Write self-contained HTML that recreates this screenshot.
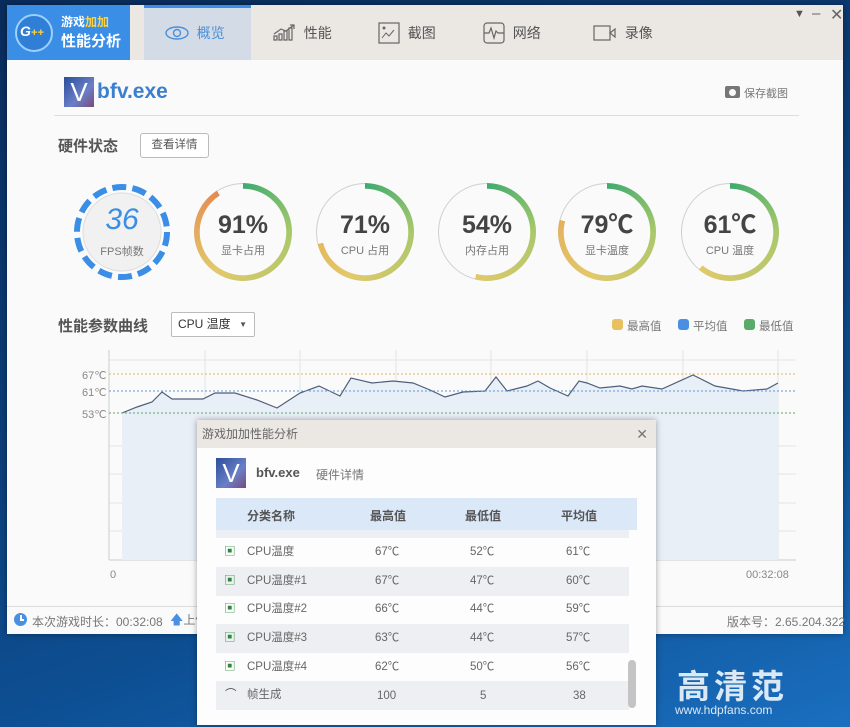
<!DOCTYPE html>
<html><head><meta charset="utf-8"><style>
*{margin:0;padding:0;box-sizing:border-box}
body{width:850px;height:727px;overflow:hidden;position:relative;font-family:"Liberation Sans","Noto Sans CJK SC",sans-serif;background:linear-gradient(160deg,#0a2c5c 0%,#0c3f7a 45%,#0d4f93 70%,#1a6fbf 100%)}
.abs{position:absolute;white-space:nowrap}
.win{left:7px;top:5px;width:836px;height:629px;background:#fafafa;box-shadow:0 0 6px rgba(0,0,0,.4)}
.tabbar{left:0;top:0;width:836px;height:55px;background:#ebe7e3}
.logo{left:0;top:0;width:123px;height:55px;background:#3a8ee6}
.tab{top:0;height:55px;font-size:14px;color:#555;display:flex;align-items:center}
.g{position:absolute;top:183px;width:98px;height:98px}
.track{position:absolute;left:0;top:0;width:98px;height:98px;border-radius:50%;border:1.5px solid #cfcfcf}
.arc{position:absolute;left:0;top:0;width:98px;height:98px;border-radius:50%;-webkit-mask:radial-gradient(circle,transparent 43px,#000 43.5px);mask:radial-gradient(circle,transparent 43px,#000 43.5px)}
.val{position:absolute;left:0;width:98px;text-align:center;top:27px;font-size:25px;line-height:30px;font-weight:bold;color:#444}
.lbl{position:absolute;left:0;width:98px;text-align:center;top:59px;font-size:11px;color:#777}
.row{position:absolute;left:216px;width:413px;height:28.6px;font-size:11.5px;color:#666}
.row span{position:absolute;top:7px;line-height:15px}
</style></head><body>
<div class="abs win">
 <div class="abs tabbar"></div>
 <div class="abs logo">
  <div class="abs" style="left:8px;top:9px;width:38px;height:38px;border-radius:50%;border:2px solid #9cd0ff;background:#2f7fd6"></div>
  <div class="abs" style="left:13px;top:18px;color:#fff;font-weight:bold;font-style:italic;font-size:14px">G<span style="color:#ffd23f;font-size:11px">+</span><span style="color:#ffd23f;font-size:11px">+</span></div>
  <div class="abs" style="left:54px;top:8px;color:#fff;font-size:12px;font-weight:bold">游戏<span style="color:#ffd23f">加加</span></div>
  <div class="abs" style="left:54px;top:25px;color:#fff;font-size:15px;font-weight:bold">性能分析</div>
 </div>
 <div class="abs" style="left:137px;top:0;width:107px;height:55px;background:#d3dce6;border-top:3px solid #3a8ee6"></div>
 <div class="abs tab" style="left:158px;color:#4a8fd8"><svg width="24" height="14" viewBox="0 0 24 14"><ellipse cx="12" cy="7" rx="11" ry="6" fill="none" stroke="#4a8fd8" stroke-width="1.4"/><circle cx="12" cy="7" r="3.5" fill="none" stroke="#4a8fd8" stroke-width="1.4"/></svg>&nbsp;&nbsp;概览</div>
 <div class="abs tab" style="left:265px"><svg width="24" height="20" viewBox="0 0 24 20"><path d="M2 17h3v-4H2zM7 17h3v-6H7zM12 17h3V8h-3zM17 17h3V5h-3zM2 11l7-5 5 2 8-6M18 2h4v4" fill="none" stroke="#666" stroke-width="1.2"/></svg>&nbsp;&nbsp;性能</div>
 <div class="abs tab" style="left:371px"><svg width="22" height="22" viewBox="0 0 22 22"><rect x="1" y="1" width="20" height="20" fill="none" stroke="#666" stroke-width="1.2"/><path d="M4 16l4-5 3 3 5-6" fill="none" stroke="#666"/><circle cx="6" cy="6" r="1.5" fill="#666"/></svg>&nbsp;&nbsp;截图</div>
 <div class="abs tab" style="left:476px"><svg width="22" height="22" viewBox="0 0 22 22"><rect x="1" y="1" width="20" height="20" rx="3" fill="none" stroke="#666" stroke-width="1.2"/><path d="M1 11h5l2-5 3 10 2-7 2 2h6" fill="none" stroke="#666" stroke-width="1.2"/></svg>&nbsp;&nbsp;网络</div>
 <div class="abs tab" style="left:586px"><svg width="24" height="18" viewBox="0 0 24 18"><rect x="1" y="2" width="16" height="14" fill="none" stroke="#666" stroke-width="1.2"/><path d="M17 9l5-4v8z" fill="none" stroke="#666" stroke-width="1.2"/></svg>&nbsp;&nbsp;录像</div>
 <div class="abs" style="left:787px;top:3px;font-size:11px;color:#555">▼</div>
 <div class="abs" style="left:805px;top:0px;font-size:15px;color:#666">–</div>
 <div class="abs" style="left:823px;top:0px;font-size:16px;color:#666">✕</div>
 <div class="abs" style="left:57px;top:72px;width:30px;height:30px;background:linear-gradient(135deg,#2b4f9a,#6a7fc8 60%,#7a4a7a);color:#fff;font-size:26px;line-height:30px;text-align:center">V</div>
 <div class="abs" style="left:90px;top:75px;font-size:21px;font-weight:bold;color:#3b7fcf">bfv.exe</div>
 <div class="abs" style="left:47px;top:110px;width:745px;height:1px;background:#ddd"></div>
 <div class="abs" style="left:718px;top:81px;width:15px;height:12px;background:#777;border-radius:2px"><div class="abs" style="left:4px;top:3px;width:7px;height:7px;border-radius:50%;background:#fafafa"></div></div>
 <div class="abs" style="left:737px;top:80px;font-size:11px;color:#777">保存截图</div>
 <div class="abs" style="left:51px;top:130px;font-size:15px;font-weight:bold;color:#555">硬件状态</div>
 <div class="abs" style="left:133px;top:128px;width:69px;height:25px;border:1px solid #bbb;border-radius:3px;background:#fff;font-size:11.5px;color:#555;text-align:center;line-height:23px">查看详情</div>
 <div class="abs" style="left:51px;top:310px;font-size:15px;font-weight:bold;color:#555">性能参数曲线</div>
 <div class="abs" style="left:164px;top:307px;width:84px;height:25px;border:1px solid #bbb;border-radius:2px;background:#fff;font-size:12px;color:#333;line-height:23px;padding-left:6px">CPU 温度<span style="position:absolute;right:7px;font-size:8px;color:#555">▼</span></div>
 <div class="abs" style="left:605px;top:314px;width:11px;height:11px;border-radius:3px;background:#e8c060"></div>
 <div class="abs" style="left:620px;top:313px;font-size:11.5px;color:#777">最高值</div>
 <div class="abs" style="left:671px;top:314px;width:11px;height:11px;border-radius:3px;background:#4a90e2"></div>
 <div class="abs" style="left:686px;top:313px;font-size:11.5px;color:#777">平均值</div>
 <div class="abs" style="left:737px;top:314px;width:11px;height:11px;border-radius:3px;background:#5aaa6a"></div>
 <div class="abs" style="left:752px;top:313px;font-size:11.5px;color:#777">最低值</div>
 <div class="abs" style="left:0;top:601px;width:836px;height:1px;background:#ddd"></div>
 <div class="abs" style="left:7px;top:608px;width:13px;height:13px;border-radius:50%;background:#4a90e2"><div class="abs" style="left:6px;top:2px;width:1.5px;height:5px;background:#fff"></div><div class="abs" style="left:6px;top:6px;width:4px;height:1.5px;background:#fff"></div></div>
 <div class="abs" style="left:25px;top:608px;font-size:12px;color:#777">本次游戏时长：00:32:08</div>
 <div class="abs" style="left:163px;top:606px;font-size:13px;color:#4a90e2">🡅<span style="color:#777;font-size:12px">上传</span></div>
 <div class="abs" style="left:720px;top:608px;font-size:12px;color:#777">版本号：2.65.204.322</div>
</div>

<div class="g" style="left:73px"><svg width="98" height="98"><circle cx="49" cy="49" r="39" fill="#f1f1f1" stroke="#ddd"/><circle cx="49" cy="49" r="45" fill="none" stroke="#3a8ee6" stroke-width="6" stroke-dasharray="14 6.2"/></svg>
 <div class="val" style="font-weight:normal;font-style:italic;color:#3a8ee6;font-size:30px;top:22px">36</div><div class="lbl" style="top:60px">FPS帧数</div></div>
<div class="g" style="left:194px"><div class="track"></div><div class="arc" style="background:conic-gradient(#3dab6f 0,#a9c86a 25%,#e2c96a 60%,#e4a25a 80%,#e58a50 91%,transparent 91%)"></div><div class="val">91%</div><div class="lbl">显卡占用</div></div>
<div class="g" style="left:316px"><div class="track"></div><div class="arc" style="background:conic-gradient(#3dab6f 0,#a9c86a 25%,#e2c96a 55%,#e4b85e 71%,transparent 71%)"></div><div class="val">71%</div><div class="lbl">CPU 占用</div></div>
<div class="g" style="left:438px"><div class="track"></div><div class="arc" style="background:conic-gradient(#3dab6f 0,#a9c86a 25%,#e2c96a 54%,transparent 54%)"></div><div class="val">54%</div><div class="lbl">内存占用</div></div>
<div class="g" style="left:558px"><div class="track"></div><div class="arc" style="background:conic-gradient(#3dab6f 0,#a9c86a 25%,#e2c96a 55%,#e4b05c 79%,transparent 79%)"></div><div class="val">79℃</div><div class="lbl">显卡温度</div></div>
<div class="g" style="left:681px"><div class="track"></div><div class="arc" style="background:conic-gradient(#3dab6f 0,#a9c86a 25%,#e2c96a 61%,transparent 61%)"></div><div class="val">61℃</div><div class="lbl">CPU 温度</div></div>

<svg class="abs" style="left:0;top:0" width="850" height="727">
 <g stroke="#e2e4e8" stroke-width="1">
  <line x1="109" y1="360" x2="796" y2="360"/><line x1="109" y1="446" x2="796" y2="446"/><line x1="109" y1="474" x2="796" y2="474"/><line x1="109" y1="503" x2="796" y2="503"/><line x1="109" y1="531" x2="796" y2="531"/>
  <line x1="205" y1="350" x2="205" y2="560"/><line x1="300" y1="350" x2="300" y2="560"/><line x1="396" y1="350" x2="396" y2="560"/><line x1="491" y1="350" x2="491" y2="560"/><line x1="587" y1="350" x2="587" y2="560"/><line x1="683" y1="350" x2="683" y2="560"/><line x1="778" y1="350" x2="778" y2="560"/>
 </g>
 <line x1="109" y1="350" x2="109" y2="560" stroke="#ccc"/><line x1="109" y1="560" x2="796" y2="560" stroke="#ccc"/>
 <path d="M122 413L137 407 152 402 162 392 172 399 203 399 215 393 235 393 257 400 277 408 300 393 319 386 340 396 351 378 372 383 393 381 413 383 430 390 445 397 463 392 485 391 496 377 507 391 527 386 538 381 550 388 568 396 579 381 587 383 600 388 620 386 632 389 642 386 662 389 693 375 715 386 743 391 767 389 778 383L778 560 122 560Z" fill="#e9eff7"/>
 <path d="M122 413L137 407 152 402 162 392 172 399 203 399 215 393 235 393 257 400 277 408 300 393 319 386 340 396 351 378 372 383 393 381 413 383 430 390 445 397 463 392 485 391 496 377 507 391 527 386 538 381 550 388 568 396 579 381 587 383 600 388 620 386 632 389 642 386 662 389 693 375 715 386 743 391 767 389 778 383" fill="none" stroke="#4f5f78" stroke-width="1.2"/>
 <line x1="109" y1="374" x2="796" y2="374" stroke="#e8b060" stroke-dasharray="2 2"/>
 <line x1="109" y1="391" x2="796" y2="391" stroke="#5a9ae0" stroke-dasharray="2 2"/>
 <line x1="109" y1="413" x2="796" y2="413" stroke="#5aaa6a" stroke-dasharray="2 2"/>
 <g font-size="11" fill="#888" font-family="Liberation Sans,sans-serif"><text x="82" y="379">67℃</text><text x="82" y="396">61℃</text><text x="82" y="418">53℃</text><text x="110" y="578">0</text><text x="746" y="578">00:32:08</text></g>
</svg>

<div class="abs" style="left:677px;top:660px;font-size:33px;color:#dbe8f5;letter-spacing:4px;font-weight:bold">高清范</div>
<div class="abs" style="left:675px;top:703px;font-size:12px;color:#dbe8f5">www.hdpfans.com</div>

<div class="abs" style="left:197px;top:420px;width:459px;height:305px;background:#fdfdfd;box-shadow:0 0 6px rgba(0,0,0,.35)">
 <div class="abs" style="left:0;top:0;width:459px;height:28px;background:#ebe7e3;font-size:12px;color:#666;line-height:28px;padding-left:5px">游戏加加性能分析<span style="position:absolute;right:8px;font-size:14px;color:#777">✕</span></div>
 <div class="abs" style="left:19px;top:38px;width:30px;height:30px;background:linear-gradient(135deg,#2b4f9a,#6a7fc8 60%,#7a4a7a);color:#fff;font-size:26px;line-height:30px;text-align:center">V</div>
 <div class="abs" style="left:59px;top:45px;font-size:13px;font-weight:bold;color:#555">bfv.exe</div>
 <div class="abs" style="left:119px;top:46px;font-size:12px;color:#777">硬件详情</div>
</div>
<div class="abs" style="left:216px;top:498px;width:421px;height:32px;background:#dae8f8;font-size:12px;font-weight:bold;color:#555"><span class="abs" style="left:31px;top:9px">分类名称</span><span class="abs" style="left:154px;top:9px">最高值</span><span class="abs" style="left:249px;top:9px">最低值</span><span class="abs" style="left:345px;top:9px">平均值</span></div>
<div class="abs" style="left:216px;top:530px;width:413px;height:8px;background:#eceff3"></div>
<div class="row" style="top:538px"><span style="left:8px;color:#2a8a3a">▣</span><span style="left:31px">CPU温度</span><span style="left:159px">67℃</span><span style="left:254px">52℃</span><span style="left:350px">61℃</span></div>
<div class="row" style="top:567px;background:#eeeff2"><span style="left:8px;color:#2a8a3a">▣</span><span style="left:31px">CPU温度#1</span><span style="left:159px">67℃</span><span style="left:254px">47℃</span><span style="left:350px">60℃</span></div>
<div class="row" style="top:595px"><span style="left:8px;color:#2a8a3a">▣</span><span style="left:31px">CPU温度#2</span><span style="left:159px">66℃</span><span style="left:254px">44℃</span><span style="left:350px">59℃</span></div>
<div class="row" style="top:624px;background:#eeeff2"><span style="left:8px;color:#2a8a3a">▣</span><span style="left:31px">CPU温度#3</span><span style="left:159px">63℃</span><span style="left:254px">44℃</span><span style="left:350px">57℃</span></div>
<div class="row" style="top:653px"><span style="left:8px;color:#2a8a3a">▣</span><span style="left:31px">CPU温度#4</span><span style="left:159px">62℃</span><span style="left:254px">50℃</span><span style="left:350px">56℃</span></div>
<div class="row" style="top:681px;background:#eeeff2"><span style="left:9px;color:#555">⌒</span><span style="left:31px">帧生成</span><span style="left:161px;top:8px">100</span><span style="left:264px;top:8px">5</span><span style="left:357px;top:8px">38</span></div>
<div class="abs" style="left:628px;top:660px;width:8px;height:48px;border-radius:4px;background:#c4c4c4"></div>
</body></html>
